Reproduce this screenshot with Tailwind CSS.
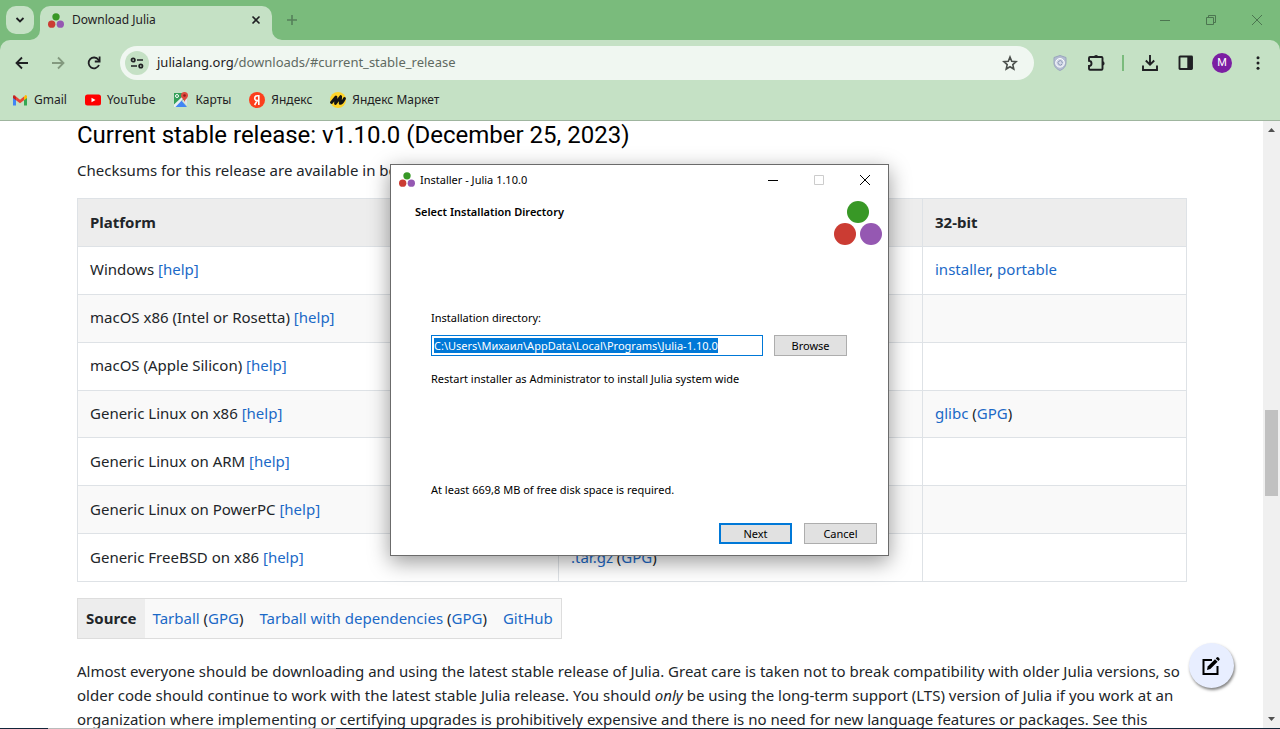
<!DOCTYPE html>
<html lang="en">
<head>
<meta charset="utf-8">
<meta name="viewport" content="width=device-width, initial-scale=1">
<title>Download Julia</title>
<script src="https://cdn.jsdelivr.net/npm/@tailwindcss/browser@4"></script>
</head>
<body class="h-screen overflow-hidden flex flex-col bg-white font-['Noto_Sans',sans-serif] text-[#1f2023]">
<svg class="hidden" aria-hidden="true">
  <symbol id="julia" viewBox="0 0 48 44">
    <circle cx="24" cy="11" r="11" fill="#389826"/>
    <circle cx="11" cy="33" r="11" fill="#cb3c33"/>
    <circle cx="37" cy="33" r="11" fill="#9558b2"/>
  </symbol>
</svg>

<!-- Browser chrome -->
<header class="shrink-0 bg-[#7abb7c]">
  <div class="flex h-10 items-end">
    <button aria-label="Search tabs" class="mb-1.5 ml-1.5 flex size-7 items-center justify-center rounded-[10px] bg-[#c5e1c5]">
      <svg class="size-3" viewBox="0 0 12 12" fill="none" stroke="#1f2023" stroke-width="1.8"><path d="M2.5 4l3.5 3.5L9.500 4"/></svg>
    </button>
    <svg class="h-2.5 w-2.5 -ml-1" viewBox="0 0 10 10"><path d="M10 0v10H0A10 10 0 0 0 10 0z" fill="#c5e1c5"/></svg>
    <div class="flex h-[34px] w-58 items-center rounded-t-[10px] bg-[#c5e1c5] pl-2 pr-2 pb-1.5">
      <svg class="h-[15px] w-4"><use href="#julia"/></svg>
      <span class="ml-2 flex-1 text-xs">Download Julia</span>
      <button aria-label="Close tab" class="flex size-4 items-center justify-center">
        <svg class="size-3" viewBox="0 0 12 12" stroke="#1f2023" stroke-width="1.6"><path d="M2.500 2.500l7 7M9.500 2.500l-7 7"/></svg>
      </button>
    </div>
    <svg class="size-2.5" viewBox="0 0 10 10"><path d="M0 0v10h10A10 10 0 0 1 0 0z" fill="#c5e1c5"/></svg>
    <button aria-label="New tab" class="mb-3 ml-0.5 flex size-4 items-center justify-center">
      <svg class="size-3" viewBox="0 0 12 12" stroke="#55805a" stroke-width="1.6"><path d="M6 1v10M1 6h10"/></svg>
    </button>
    <div class="ml-auto flex h-10">
      <button aria-label="Minimize" class="flex w-[46px] items-center justify-center"><svg class="size-3" viewBox="0 0 12 12" stroke="#4c7550"><path d="M1 6.500h10"/></svg></button>
      <button aria-label="Restore" class="flex w-[46px] items-center justify-center"><svg class="size-3" viewBox="0 0 12 12" fill="none" stroke="#4c7550"><path d="M1.500 3.500h7v7h-7zM3.500 3.500v-2h7v7h-2"/></svg></button>
      <button aria-label="Close" class="flex w-[46px] items-center justify-center"><svg class="size-3" viewBox="0 0 12 12" stroke="#4c7550"><path d="M1 1l10 10M11 1L1 11"/></svg></button>
    </div>
  </div>

  <div class="rounded-t-[10px] border-b border-[#9fb59f] bg-[#c5e1c5]">
    <div class="flex h-[46px] items-center pl-3 pr-3">
      <button aria-label="Back" class="flex size-5 items-center justify-center"><svg class="size-4" viewBox="0 0 16 16" fill="none" stroke="#1f2023" stroke-width="1.8"><path d="M14 8H3M8 2.500L2.500 8 8 13.500"/></svg></button>
      <button aria-label="Forward" class="ml-4 flex size-5 items-center justify-center"><svg class="size-4" viewBox="0 0 16 16" fill="none" stroke="#83997f" stroke-width="1.8"><path d="M2 8h11M8 2.500L13.500 8 8 13.500"/></svg></button>
      <button aria-label="Reload" class="ml-4 flex size-5 items-center justify-center"><svg class="size-4" viewBox="0 0 16 16" fill="none" stroke="#1f2023" stroke-width="1.8"><path d="M13 10a5.400 5.400 0 1 1-.6-5.300L13.500 6"/><path d="M13.600 1.500v5H8.800"/></svg></button>
      <div class="ml-4 flex h-[34px] flex-1 items-center rounded-full bg-[#f0f7f1] pl-[5px] pr-4">
        <button aria-label="Site information" class="flex size-6 items-center justify-center rounded-full bg-[#c5e1c5]">
          <svg class="size-4" viewBox="0 0 16 16" fill="none" stroke="#1f2023" stroke-width="1.7"><circle cx="4.200" cy="5" r="1.700"/><path d="M8 5h6M2 11h6"/><circle cx="11.800" cy="11" r="1.700"/></svg>
        </button>
        <div class="ml-2 flex-1 text-[13px]">julialang.org<span class="text-[#5f6a62]">/downloads/#current_stable_release</span></div>
        <button aria-label="Bookmark this tab"><svg class="size-4" viewBox="0 0 16 16" fill="none" stroke="#4a4f4b" stroke-width="1.600"><path d="M8 2l1.700 4.200 4.500.4-3.400 3 1 4.400L8 11.700 4.200 14l1-4.400-3.400-3 4.500-.4z"/></svg></button>
      </div>
      <div class="ml-4 flex items-center">
        <button aria-label="Ad blocker" class="flex size-5 items-center justify-center"><svg class="size-4" viewBox="0 0 16 16"><path d="M8 .5l6 2V8c0 3.500-2.600 6-6 7.500C4.600 14 2 11.500 2 8V2.500z" fill="#b4bdd2" stroke="#9aa5be"/><circle cx="8" cy="7.800" r="4.300" fill="#d3d9e8" stroke="#fff"/><path d="M10 9.200a2.200 2.200 0 1 1 .2-2.400v1.600" fill="none" stroke="#8d98b5"/></svg></button>
        <button aria-label="Extensions" class="ml-4 flex size-5 items-center justify-center"><svg class="size-[18px]" viewBox="0 0 18 18"><path d="M3 3h11.500a1 1 0 0 1 1 1v10.800a1 1 0 0 1-1 1H3a1 1 0 0 1-1-1v-2.900a2.500 2.500 0 0 0 0-5V4a1 1 0 0 1 1-1z" fill="none" stroke="#1f2023" stroke-width="1.900"/><path d="M7 3a2.100 2.100 0 0 1 4.200 0zM15.500 7.300a2.100 2.100 0 0 1 0 4.200z" fill="#1f2023"/></svg></button>
        <span class="ml-4 h-4 w-0.5 bg-[#7abb7c]"></span>
        <button aria-label="Downloads" class="ml-4 flex size-5 items-center justify-center"><svg class="size-[18px]" viewBox="0 0 18 18" fill="none" stroke="#1f2023" stroke-width="1.900"><path d="M9 1v9.500M4.800 6.500L9 10.700l4.200-4.200M2 11.500v4.500h14v-4.500"/></svg></button>
        <button aria-label="Side panel" class="ml-4 flex size-5 items-center justify-center"><svg class="size-4" viewBox="0 0 16 16"><rect x="1.500" y="1.500" width="12.500" height="12.500" rx=".5" fill="none" stroke="#1f2023" stroke-width="1.900"/><path d="M9.300 1.500H14V14H9.300z" fill="#1f2023"/></svg></button>
        <button aria-label="Profile" class="ml-4 flex size-5 items-center justify-center rounded-full bg-[#7b1fa2] font-[Roboto,sans-serif] text-[11px] text-white">M</button>
        <button aria-label="Menu" class="ml-4 flex size-5 items-center justify-center"><svg class="size-4" viewBox="0 0 16 16" fill="#1f2023"><circle cx="8" cy="2.800" r="1.500"/><circle cx="8" cy="8" r="1.500"/><circle cx="8" cy="13.200" r="1.500"/></svg></button>
      </div>
    </div>
    <nav class="flex h-[34px] items-center gap-[18px] pb-1.5 pl-3 text-xs" aria-label="Bookmarks">
      <a href="#" class="flex items-center gap-1.5"><svg class="size-4" viewBox="0 0 16 16"><path d="M1 4v9.500h3V7z" fill="#4285f4"/><path d="M15 4v9.500h-3V7z" fill="#34a853"/><path d="M12 4.500L13.500 3Q15 2.800 15 4.500V6l-3 2.300z" fill="#fbbc04"/><path d="M4 4.500l4 3.200 4-3.200v3.800l-4 3-4-3z" fill="#ea4335"/><path d="M1 6V4.500Q1 2.500 3 3.500l1 1v3.800z" fill="#c5221f"/></svg>Gmail</a>
      <a href="#" class="flex items-center gap-1.5"><svg class="size-4" viewBox="0 0 16 16"><rect y="2.500" width="16" height="11" rx="2.500" fill="#f00"/><path d="M6.500 5.700v4.600l4-2.300z" fill="#fff"/></svg>YouTube</a>
      <a href="#" class="flex items-center gap-1.5"><svg class="size-4" viewBox="0 0 16 16"><path d="M1 1h11v6L1 14z" fill="#34a058"/><path d="M1 14.500L8 8l6 7H1z" fill="#4285f4"/><path d="M1 12.500L10 4l1.500 1.500L2.500 15H1z" fill="#e9eef0"/><path d="M9 8.500l5 5V7z" fill="#dfe3e6"/><circle cx="4" cy="4" r="1.500" fill="none" stroke="#fff"/><path d="M11.500 0A3.500 3.500 0 0 0 8 3.500C8 6 10.500 6.500 11.500 10 12.500 6.500 15 6 15 3.500A3.500 3.500 0 0 0 11.500 0z" fill="#e04a3f"/><circle cx="11.500" cy="3.500" r="1.300" fill="#8c1f1b"/></svg>Карты</a>
      <a href="#" class="flex items-center gap-1.5"><svg class="size-4" viewBox="0 0 16 16" fill="none"><circle cx="8" cy="8" r="8" fill="#fc3f1d"/><path d="M9.800 13V3.800H8.300C6.500 3.800 5.700 4.900 5.700 6.200c0 1.300.8 2.400 2.600 2.400h1.500M8.200 8.600L5.600 13" stroke="#fff" stroke-width="1.600"/></svg>Яндекс</a>
      <a href="#" class="flex items-center gap-1.5"><svg class="size-4" viewBox="0 0 16 16" fill="none"><circle cx="8" cy="8" r="8" fill="#ffd42a"/><path d="M1.500 10.500L6 5l-.5 6.500L10.700 4.500 10.200 11.300Q12 11.500 14.500 6.500" stroke="#141414" stroke-width="2.800" stroke-linejoin="round" stroke-linecap="round"/></svg>Яндекс Маркет</a>
    </nav>
  </div>
</header>

<!-- Page -->
<div class="flex min-h-0 flex-1">
  <main class="min-w-0 flex-1 overflow-hidden pr-[76px] pl-[77px] text-[15px] leading-6 text-[#212529]">
    <h3 class="font-[Roboto,sans-serif] text-2xl leading-7 text-black">Current stable release: v1.10.0 (December 25, 2023)</h3>
    <p class="mt-[9px] mb-4">Checksums for this release are available in both <a href="#" class="text-[#1b69c7]">SHA256</a> and <a href="#" class="text-[#1b69c7]">MD5</a> formats.</p>
    <table class="h-[384px] w-full table-fixed border-collapse [&_td]:border [&_th]:border [&_td]:border-[#dee2e6] [&_th]:border-[#dee2e6] [&_td]:px-3 [&_th]:px-3 [&_td]:pb-0.5 [&_th]:pb-0.5 [&_a]:text-[#1b69c7] [&_th]:text-left [&_th]:font-bold">
      <colgroup><col class="w-[481px]"><col class="w-[364px]"><col></colgroup>
      <thead><tr class="h-12 bg-[#ededed]"><th>Platform</th><th>64-bit</th><th>32-bit</th></tr></thead>
      <tbody class="[&_tr:nth-child(even)]:bg-[#f9f9f9]">
        <tr><td>Windows <a href="#">[help]</a></td><td><a href="#">installer</a>, <a href="#">portable</a></td><td><a href="#">installer</a>, <a href="#">portable</a></td></tr>
        <tr><td>macOS x86 (Intel or Rosetta) <a href="#">[help]</a></td><td><a href="#">.dmg</a>, <a href="#">.tar.gz</a></td><td></td></tr>
        <tr><td>macOS (Apple Silicon) <a href="#">[help]</a></td><td><a href="#">.dmg</a>, <a href="#">.tar.gz</a></td><td></td></tr>
        <tr><td>Generic Linux on x86 <a href="#">[help]</a></td><td><a href="#">glibc</a> (<a href="#">GPG</a>)</td><td><a href="#">glibc</a> (<a href="#">GPG</a>)</td></tr>
        <tr><td>Generic Linux on ARM <a href="#">[help]</a></td><td><a href="#">AArch64</a> (<a href="#">GPG</a>)</td><td></td></tr>
        <tr><td>Generic Linux on PowerPC <a href="#">[help]</a></td><td><a href="#">little endian</a> (<a href="#">GPG</a>)</td><td></td></tr>
        <tr><td>Generic FreeBSD on x86 <a href="#">[help]</a></td><td><a href="#">.tar.gz</a> (<a href="#">GPG</a>)</td><td></td></tr>
      </tbody>
    </table>
    <table class="mt-4 border border-[#dddddd] bg-[#f9f9f9] [&_a]:text-[#1b69c7] [&_td]:px-2 [&_td]:pt-[7px] [&_td]:pb-2">
      <tbody><tr>
        <th class="bg-[#ededed] px-2 pt-[7px] pb-2 font-bold">Source</th>
        <td><a href="#">Tarball</a> (<a href="#">GPG</a>)</td>
        <td><a href="#">Tarball with dependencies</a> (<a href="#">GPG</a>)</td>
        <td><a href="#">GitHub</a></td>
      </tr></tbody>
    </table>
    <p class="mt-5 whitespace-nowrap">Almost everyone should be downloading and using the latest stable release of Julia. Great care is taken not to break compatibility with older Julia versions, so<br>older code should continue to work with the latest stable Julia release. You should <em>only</em> be using the long-term support (LTS) version of Julia if you work at an<br>organization where implementing or certifying upgrades is prohibitively expensive and there is no need for new language features or packages. See this</p>
  </main>
  <div class="flex w-[17px] shrink-0 flex-col items-center bg-[#f0f0f0]" aria-hidden="true">
    <svg class="size-[17px]" viewBox="0 0 17 17"><path d="M5 11l3.500-4 3.500 4z" fill="#505050"/></svg>
    <div class="flex w-[13px] flex-1 flex-col">
      <div class="flex-[272]"></div><div class="flex-[86] bg-[#c1c1c1]"></div><div class="flex-[215]"></div>
    </div>
    <svg class="size-[17px]" viewBox="0 0 17 17"><path d="M5 6l3.500 4L12 6z" fill="#505050"/></svg>
  </div>
</div>
<footer class="flex h-px shrink-0 bg-[#12263a] pl-12"><div class="w-72 bg-[#b9bcbc]"></div></footer>

<!-- Floating edit button -->
<button aria-label="Edit" class="fixed right-[46px] bottom-[41px] flex size-[45px] items-center justify-center rounded-full bg-[#e8eeff] shadow-[1px_2px_3px_rgba(0,0,0,0.5)]">
  <svg class="size-5" viewBox="0 0 20 20"><path d="M10 4H1.500v14h14V10" fill="none" stroke="#000" stroke-width="2"/><path d="M5 14l.7-3.500 7.300-7.300 2.600 2.600-7.300 7.300z" fill="#000"/><path d="M13.800 2.400l1-1q.8-.7 1.600 0l1 1q.7.8 0 1.600l-1 1z" fill="#000"/></svg>
</button>

<!-- Installer window -->
<section role="dialog" aria-label="Installer - Julia 1.10.0" class="absolute top-[164px] left-[390px] flex h-[392px] w-[499px] flex-col border border-[#6b6b6b] bg-white text-[11px] leading-4 text-black shadow-[0_6px_20px_rgba(0,0,0,0.4)]">
  <div class="flex h-[29px] items-center pl-2">
    <svg class="h-[15px] w-4"><use href="#julia"/></svg>
    <span class="ml-[5px] flex-1">Installer - Julia 1.10.0</span>
    <button aria-label="Minimize" class="flex h-full w-[46px] items-center justify-center"><svg class="size-3" viewBox="0 0 12 12" stroke="#000"><path d="M1 6.500h10"/></svg></button>
    <button aria-label="Maximize" disabled class="flex h-full w-[46px] items-center justify-center"><svg class="size-3" viewBox="0 0 12 12" fill="none" stroke="#ccc"><path d="M1.500 1.500h9v9h-9z"/></svg></button>
    <button aria-label="Close" class="flex h-full w-[46px] items-center justify-center"><svg class="size-3" viewBox="0 0 12 12" stroke="#000"><path d="M1 1l10 10M11 1L1 11"/></svg></button>
  </div>
  <div class="flex justify-between pt-[7px] pr-1.5 pl-6">
    <h2 class="pt-[3px] font-semibold">Select Installation Directory</h2>
    <svg class="h-11 w-12"><use href="#julia"/></svg>
  </div>
  <div class="flex flex-1 flex-col pt-[65px] pr-[41px] pl-10">
    <label for="dir">Installation directory:</label>
    <div class="mt-[9px] flex gap-[11px]">
      <input id="dir" type="text" value="C:\Users\Михаил\AppData\Local\Programs\Julia-1.10.0" class="h-[21px] min-w-0 flex-1 border border-[#0078d7] bg-white px-0.5 leading-[13px] outline-none selection:bg-[#0078d7] selection:text-white">
      <button class="h-[21px] w-[73px] border border-[#adadad] bg-[#e1e1e1]">Browse</button>
    </div>
    <p class="mt-[15px]">Restart installer as Administrator to install Julia system wide</p>
    <p class="mt-auto mb-[25px]">At least 669,8 MB of free disk space is required.</p>
  </div>
  <div class="flex justify-end gap-3 pr-[11px] pb-[11px]">
    <button class="h-[21px] w-[73px] border-2 border-[#0078d7] bg-[#e1e1e1]">Next</button>
    <button class="h-[21px] w-[73px] border border-[#adadad] bg-[#e1e1e1]">Cancel</button>
  </div>
</section>
<script>
  const dir = document.getElementById('dir');
  dir.focus();
  dir.select();
  dir.scrollLeft = 0;
</script>
</body>
</html>
